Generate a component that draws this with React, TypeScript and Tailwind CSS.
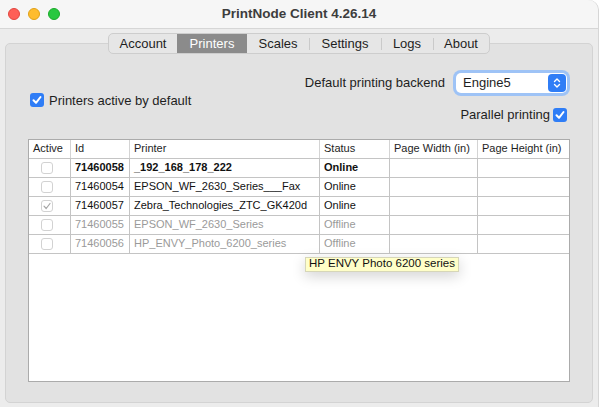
import React from "react";

const tabs = [
  {label: "Account", w: "w-[68px]"},
  {label: "Printers", w: "w-[70px]"},
  {label: "Scales", w: "w-[62px]"},
  {label: "Settings", w: "w-[72px]"},
  {label: "Logs", w: "w-[52px]"},
  {label: "About", w: "w-[56px]"},
];

const printers = [
  {id: "71460058", name: "_192_168_178_222", status: "Online", bold: true, checked: false, dim: false},
  {id: "71460054", name: "EPSON_WF_2630_Series___Fax", status: "Online", bold: false, checked: false, dim: false},
  {id: "71460057", name: "Zebra_Technologies_ZTC_GK420d", status: "Online", bold: false, checked: true, dim: false},
  {id: "71460055", name: "EPSON_WF_2630_Series", status: "Offline", bold: false, checked: false, dim: true},
  {id: "71460056", name: "HP_ENVY_Photo_6200_series", status: "Offline", bold: false, checked: false, dim: true},
];

const BlueCheck = () => (
  <span className="w-[14px] h-[14px] rounded-[3px] bg-[#2f7df6] flex items-center justify-center">
    <svg width="14" height="14" viewBox="0 0 14 14">
      <path d="M3.5 7.2 L6 9.8 L10.5 4" fill="none" stroke="#fff" strokeWidth="2" strokeLinecap="round" strokeLinejoin="round" />
    </svg>
  </span>
);

const RowCheck = ({checked}: {checked: boolean}) => (
  <span className="w-[12px] h-[12px] rounded-[3px] border border-[#d2d2d2] bg-white flex items-center justify-center">
    {checked && (
      <svg width="10" height="10" viewBox="0 0 10 10">
        <path d="M2 5.2 L4.2 7.5 L8 2.5" fill="none" stroke="#a5a5a5" strokeWidth="1.2" strokeLinecap="round" strokeLinejoin="round" />
      </svg>
    )}
  </span>
);

const cols = ["w-[42px]", "w-[59px]", "w-[190px]", "w-[70px]", "w-[88px]", "flex-1"];
const headers = ["Active", "Id", "Printer", "Status", "Page Width (in)", "Page Height (in)"];

const App: React.FC = () => {
  return (
    <div className="w-[599px] h-[407px] bg-white font-['Liberation_Sans',Arial,sans-serif] text-[#1e1e1e] overflow-hidden">
      <div className="relative w-[599px] h-[407px] bg-[#ececec] rounded-tr-[10px] border-r border-[#d6d6d6]">
        {/* title bar */}
        <div className="relative h-[29px] bg-[#f6f6f6] border-b border-[#d6d6d6] rounded-tr-[10px] flex items-center">
          <div className="flex gap-[8px] pl-[8px]">
            <span className="w-[12px] h-[12px] rounded-full bg-[#fe5f57] border border-[#e2463f]" />
            <span className="w-[12px] h-[12px] rounded-full bg-[#febc2e] border border-[#e1a116]" />
            <span className="w-[12px] h-[12px] rounded-full bg-[#28c840] border border-[#1aab29]" />
          </div>
          <div className="absolute inset-0 flex items-center justify-center text-[13.5px] font-bold text-[#3d3d3d]">
            PrintNode Client 4.26.14
          </div>
        </div>

        {/* tabs */}
        <div className="relative z-10 flex justify-center mt-[4px]">
          <div className="flex h-[21px] bg-[#e6e6e6] border border-[#cdcdcd] rounded-[5px] overflow-hidden">
            {tabs.map((t, i) => {
              const selected = t.label === "Printers";
              const sep = i > 0 && !selected && tabs[i - 1].label !== "Printers";
              return (
                <div key={t.label} className={`relative ${t.w} flex items-center justify-center text-[13px] ${selected ? "bg-[#8b8b8b] text-white" : "text-[#1e1e1e]"}`}>
                  {sep && <span className="absolute left-0 top-[4px] h-[12px] w-px bg-[#cacaca]" />}
                  {t.label}
                </div>
              );
            })}
          </div>
        </div>

        {/* group box */}
        <div className="ml-[5px] mt-[-11px] w-[588px] h-[360px] bg-[#e2e2e2] border border-[#d3d3d3] rounded-[5px] flex flex-col pl-[22px] pr-[22px]">
          <div className="flex items-center justify-between pt-[29px]">
            <label className="flex items-center gap-[5px] text-[13px] mt-[3px] pl-[2px]">
              <BlueCheck />
              Printers active by default
            </label>
            <div className="flex flex-col items-end gap-[12px] pr-[3px]">
              <div className="flex items-center gap-[11px]">
                <span className="text-[13px]">Default printing backend</span>
                <div className="w-[111px] h-[20px] bg-white rounded-[5px] shadow-[0_0_0_3px_#9ec3f6] flex items-center justify-between pl-[7px] pr-[1px]">
                  <span className="text-[13px]">Engine5</span>
                  <span className="w-[18px] h-[18px] rounded-[4px] bg-[#2f7df6] flex items-center justify-center">
                    <svg width="18" height="18" viewBox="0 0 18 18">
                      <path d="M6.5 7.5 L9 5 L11.5 7.5 M6.5 10.5 L9 13 L11.5 10.5" fill="none" stroke="#fff" strokeWidth="1.4" strokeLinecap="round" strokeLinejoin="round" />
                    </svg>
                  </span>
                </div>
              </div>
              <label className="flex items-center gap-[3px] text-[13px]">
                Parallel printing
                <BlueCheck />
              </label>
            </div>
          </div>

          {/* table */}
          <div className="relative mt-[14px] h-[243px] bg-white border border-[#ababab] text-[11px]">
            <div className="flex h-[19px] border-b border-[#c4c4c4]">
              {headers.map((h, i) => (
                <div key={h} className={`${cols[i]} flex items-center pl-[4px] ${i < 5 ? "border-r border-[#d4d4d4]" : ""}`}>
                  {h}
                </div>
              ))}
            </div>
            {printers.map((p) => (
              <div key={p.id} className={`flex h-[19px] border-b border-[#c4c4c4] ${p.dim ? "text-[#9a9a9a]" : "text-[#111]"} ${p.bold ? "font-bold" : ""}`}>
                <div className={`${cols[0]} flex items-center pl-[12px] border-r border-[#c4c4c4]`}>
                  <RowCheck checked={p.checked} />
                </div>
                <div className={`${cols[1]} flex items-center pl-[4px] border-r border-[#c4c4c4]`}>{p.id}</div>
                <div className={`${cols[2]} flex items-center pl-[4px] border-r border-[#c4c4c4]`}>{p.name}</div>
                <div className={`${cols[3]} flex items-center pl-[4px] border-r border-[#c4c4c4]`}>{p.status}</div>
                <div className={`${cols[4]} border-r border-[#c4c4c4]`} />
                <div className={cols[5]} />
              </div>
            ))}

            {/* tooltip */}
            <div className="absolute left-[276px] top-[117px] h-[15px] px-[3px] flex items-center bg-[#ffffc8] border border-[#d6d6b8] text-[11.5px] text-[#111] shadow-[0_4px_14px_rgba(0,0,0,0.18)]">
              HP ENVY Photo 6200 series
            </div>
          </div>
        </div>
      </div>
    </div>
  );
};

export default App;
